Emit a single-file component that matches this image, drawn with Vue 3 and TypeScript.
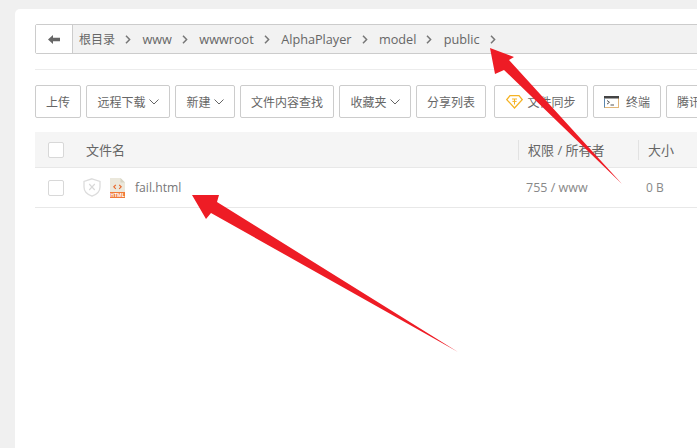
<script setup lang="ts">
const crumbs = ['www', 'wwwroot', 'AlphaPlayer', 'model', 'public']
</script>

<template>
  <div class="page">
    <div class="card">
      <div class="crumb-bar">
        <button class="back">
          <svg width="12" height="9" viewBox="0 0 12 9"><path d="M0 4.5 L5 0 V2.8 H12 V6.2 H5 V9 Z" fill="#666" /></svg>
        </button>
        <div class="crumbs">
          <span class="crumb root">根目录</span>
          <svg class="sep" width="6" height="9" viewBox="0 0 6 9"><path d="M1 .8 L4.6 4.5 L1 8.2" fill="none" stroke="#777" stroke-width="1.5" /></svg>
          <template v-for="c in crumbs" :key="c">
            <span class="crumb">{{ c }}</span>
            <svg class="sep" width="6" height="9" viewBox="0 0 6 9"><path d="M1 .8 L4.6 4.5 L1 8.2" fill="none" stroke="#777" stroke-width="1.5" /></svg>
          </template>
        </div>
      </div>

      <div class="divider"></div>

      <div class="toolbar">
        <button class="btn w46">上传</button>
        <button class="btn w84">远程下载<svg class="caret" width="10" height="6" viewBox="0 0 10 6"><path d="M.5 .5 L5 5 L9.5 .5" fill="none" stroke="#666" /></svg></button>
        <button class="btn w60">新建<svg class="caret" width="10" height="6" viewBox="0 0 10 6"><path d="M.5 .5 L5 5 L9.5 .5" fill="none" stroke="#666" /></svg></button>
        <button class="btn w94">文件内容查找</button>
        <button class="btn w72">收藏夹<svg class="caret" width="10" height="6" viewBox="0 0 10 6"><path d="M.5 .5 L5 5 L9.5 .5" fill="none" stroke="#666" /></svg></button>
        <button class="btn w70">分享列表</button>
        <button class="btn w94 gap-l">
          <svg class="gem" width="17" height="14" viewBox="0 0 17 14"><path d="M4 .7 H13 L16.2 4.6 L8.5 13 L.8 4.6 Z" fill="#fff" stroke="#f5b324" stroke-width="1.3" /><path d="M6 4 H11 M8.5 4 V9.5 M6.4 6.4 H10.6" stroke="#f5b324" fill="none" /></svg>
          文件同步
        </button>
        <button class="btn w68">
          <svg class="term" width="15" height="12" viewBox="0 0 15 12"><rect x=".5" y=".5" width="14" height="11" fill="#fff" stroke="#e2b77a" /><rect x="0" y="0" width="15" height="2.5" fill="#444" /><path d="M.5 2.5 V11.5" stroke="#5b86ad" /><path d="M3 4.5 L5.5 6.3 L3 8.1 M6.5 9 H10" fill="none" stroke="#555" /></svg>
          终端
        </button>
        <button class="btn w90">腾讯云存储</button>
      </div>

      <div class="table">
        <div class="row head">
          <div class="cell-check"><span class="check"></span></div>
          <div class="cell-name">文件名</div>
          <div class="cell-perm"><span class="bar"></span>权限 / 所有者</div>
          <div class="cell-size"><span class="bar"></span>大小</div>
        </div>
        <div class="row body-row">
          <div class="cell-check"><span class="check"></span></div>
          <div class="cell-name">
            <svg class="shield" width="18" height="19" viewBox="0 0 18 19">
              <path d="M9 .8 L17 3.4 V9 C17 13.2 13.4 16.6 9 18.2 C4.6 16.6 1 13.2 1 9 V3.4 Z" fill="#fff" stroke="#dcdcdc" stroke-width="1.3" />
              <path d="M6.2 6 L11.8 12 M11.8 6 L6.2 12" stroke="#d8d8d8" stroke-width="1.1" />
            </svg>
            <svg class="file" width="15" height="20" viewBox="0 0 15 20">
              <path d="M0 0 H10.5 L15 4.5 V20 H0 Z" fill="#ebe8dc" />
              <path d="M10.5 0 L15 4.5 H10.5 Z" fill="#d8d4c4" />
              <rect x="0" y="14" width="15" height="6" fill="#f07a3a" />
              <path d="M5.8 6.8 L3.8 8.8 L5.8 10.8 M9.2 6.8 L11.2 8.8 L9.2 10.8" fill="none" stroke="#e8662a" stroke-width="1.1" />
              <text x="7.5" y="19" text-anchor="middle" font-size="5" font-weight="700" fill="#fff">HTML</text>
            </svg>
            <span class="fname">fail.html</span>
          </div>
          <div class="cell-perm">755 / www</div>
          <div class="cell-size">0 B</div>
        </div>
      </div>
    </div>

    <svg class="arrows" width="697" height="448" viewBox="0 0 697 448">
      <path d="M490 48 L514 57 L509 60 L622 184 L504 70 L495 74 Z" fill="#ee1c25" />
      <path d="M192 195 L219 195 L217 202 L458 352 L211 213 L206 219 Z" fill="#ee1c25" />
    </svg>
  </div>
</template>

<style scoped>
.page {
  position: relative;
  height: 448px;
  width: 697px;
  overflow: hidden;
  background: #f0f0f0;
  padding: 9px 0 0 15px;
  box-sizing: border-box;
  font-family: "Open Sans", "Noto Sans CJK SC", sans-serif;
  color: #666;
}

.card {
  background: #fff;
  border-radius: 5px 0 0 0;
  width: 700px;
  height: 460px;
  padding: 15px 0 0 20px;
  box-sizing: border-box;
}

.crumb-bar {
  display: flex;
  height: 30px;
  width: 680px;
  box-sizing: border-box;
  border: 1px solid #ccc;
  border-radius: 2px;
  background: #f2f2f2;
}

.back {
  width: 37px;
  border: 0;
  border-right: 1px solid #ccc;
  background: #fff;
  padding: 0;
  display: flex;
  align-items: center;
  justify-content: center;
}

.crumbs {
  display: flex;
  align-items: center;
  padding-left: 6px;
  font-size: 12.7px;
  color: #666;
  white-space: nowrap;
}

.root {
  font-size: 12px;
}

.sep {
  margin: 0 11.4px 0 10px;
}

.divider {
  height: 1px;
  background: #ececec;
  margin-top: 15px;
  width: 680px;
}

.toolbar {
  display: flex;
  gap: 5px;
  margin-top: 15px;
  width: 680px;
}

.btn {
  flex: none;
  height: 33px;
  border: 1px solid #ccc;
  border-radius: 2px;
  background: #fff;
  color: #666;
  font-family: inherit;
  font-size: 12px;
  padding: 0;
  display: flex;
  align-items: center;
  justify-content: center;
  white-space: nowrap;
}

.w46 { width: 46px; }
.w84 { width: 84px; }
.w60 { width: 60px; }
.w94 { width: 94px; }
.w72 { width: 72px; }
.w70 { width: 70px; }
.w68 { width: 68px; }
.w90 { width: 90px; justify-content: flex-start; padding-left: 10px; }
.gap-l { margin-left: 3px; }

.caret { margin-left: 3px; }
.gem { margin-right: 4px; }
.term { margin-right: 7px; }

.table {
  margin-top: 14px;
  width: 680px;
}

.row {
  display: flex;
  align-items: center;
  box-sizing: border-box;
  border-bottom: 1px solid #e8e8e8;
}

.head {
  height: 36px;
  background: #f5f5f5;
  font-size: 13px;
  color: #666;
}

.body-row {
  height: 40px;
  font-size: 12px;
  color: #888;
}

.cell-check {
  width: 51px;
  padding-left: 13px;
  box-sizing: border-box;
  display: flex;
}

.check {
  width: 16px;
  height: 16px;
  box-sizing: border-box;
  border: 1px solid #d8d8d8;
  border-radius: 2px;
  background: #fff;
}

.cell-name {
  flex: none;
  width: 440px;
  display: flex;
  align-items: center;
}

.shield { margin-left: -3px; margin-right: 9px; }
.file { margin-right: 10px; }

.fname {
  font-size: 12.2px;
  color: #777;
}

.cell-perm {
  flex: none;
  width: 120px;
}

.cell-size {
  flex: none;
  width: 60px;
}

.body-row .cell-perm {
  font-size: 12.5px;
}

.head .cell-perm,
.head .cell-size {
  display: flex;
  align-items: center;
  gap: 9px;
}

.bar {
  width: 1px;
  height: 20px;
  margin-left: -8px;
  background: #e2e2e2;
}

.arrows {
  position: absolute;
  left: 0;
  top: 0;
  pointer-events: none;
}
</style>

<style>
html, body { margin: 0; background: #f0f0f0; overflow: hidden; }
</style>
